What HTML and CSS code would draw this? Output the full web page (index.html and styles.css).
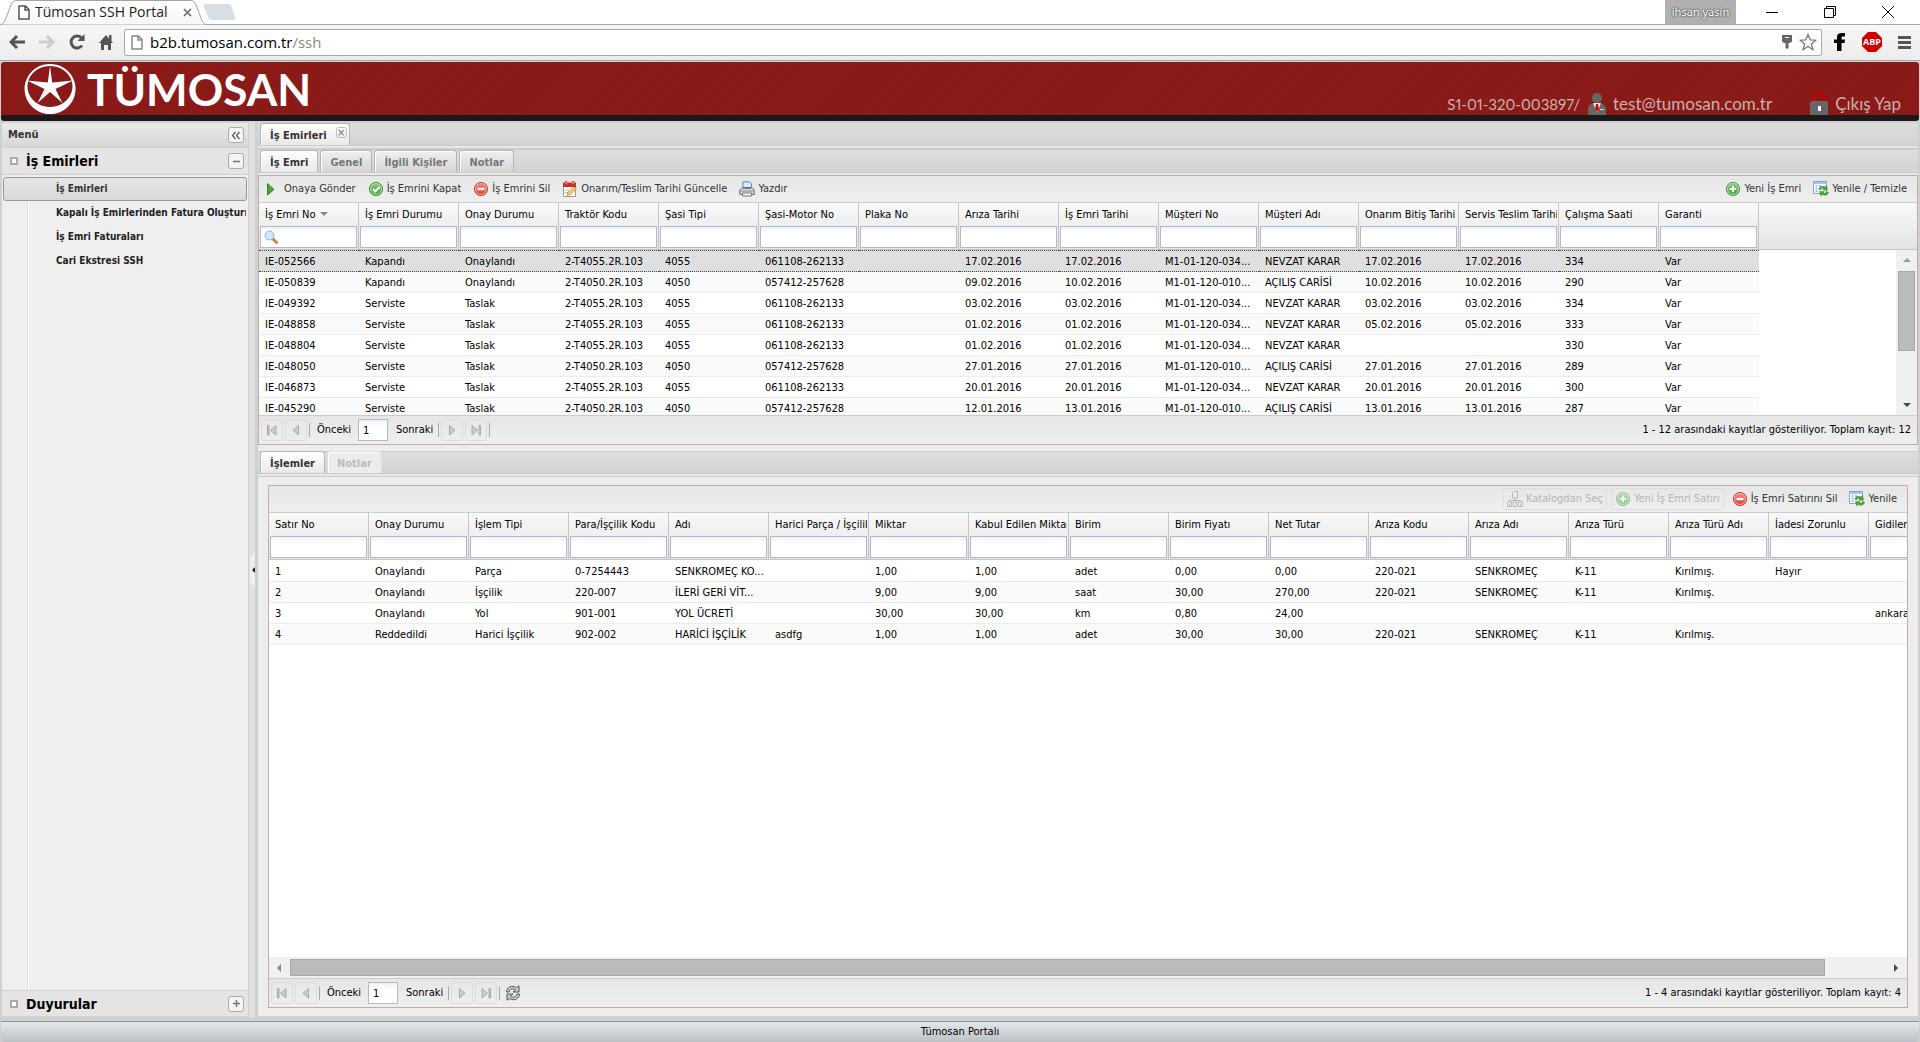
FILE: index.html
```html
<!DOCTYPE html>
<html lang="tr">
<head>
<meta charset="utf-8">
<title>Tümosan SSH Portal</title>
<link rel="stylesheet" href="styles.css">
</head>
<body>
<svg class="sprite" aria-hidden="true">
  <defs>
    <linearGradient id="gGreen" x1="0" y1="0" x2="0" y2="1"><stop offset="0" stop-color="#8fd080"/><stop offset="1" stop-color="#3c9a35"/></linearGradient>
    <linearGradient id="gRed" x1="0" y1="0" x2="0" y2="1"><stop offset="0" stop-color="#f59080"/><stop offset="1" stop-color="#d93a30"/></linearGradient>
    <linearGradient id="gTab" x1="0" y1="0" x2="0" y2="1"><stop offset="0" stop-color="#fff"/><stop offset="1" stop-color="#f7f7f7"/></linearGradient>
  </defs>
  <symbol id="i-play" viewBox="0 0 16 16"><path d="M2.500 2.500 9 8.500 2.500 14z" fill="#4ea72f" stroke="#36861d"/></symbol>
  <symbol id="i-ok" viewBox="0 0 16 16"><circle cx="8" cy="8" r="6.600" fill="url(#gGreen)" stroke="#3a8f35"/><circle cx="8" cy="8" r="5.500" fill="none" stroke="#b5e3aa"/><path d="m5 8 2.200 2.500L11.500 6" fill="none" stroke="#fff" stroke-width="2"/></symbol>
  <symbol id="i-del" viewBox="0 0 16 16"><circle cx="8" cy="8" r="6.600" fill="url(#gRed)" stroke="#c8453c"/><circle cx="8" cy="8" r="5.500" fill="none" stroke="#f8aaa0"/><path d="M4.500 6.800h7v2.400h-7z" fill="#fff"/></symbol>
  <symbol id="i-add" viewBox="0 0 16 16"><circle cx="8" cy="8" r="6.600" fill="url(#gGreen)" stroke="#4a9a44"/><circle cx="8" cy="8" r="5.500" fill="none" stroke="#b5e3aa"/><path d="M8 4.800v6.400M4.800 8h6.400" stroke="#fff" stroke-width="2"/></symbol>
  <symbol id="i-cal" viewBox="0 0 16 16"><path d="M1.500 4h12v11.500h-12z" fill="#fdfdfd" stroke="#999"/><path d="M1 1.500h13V6H1z" fill="#d8281f"/><path d="M4 0v4M11 0v4" stroke="#8b1512" stroke-width="2"/><path d="M4 .5v3M11 .5v3" stroke="#fff"/><path d="M3 9h4M3 11.500h3" stroke="#bbb"/><path d="m5 14.500.8-3L12 6l2.300 2-6.300 5.500z" fill="#f8cf6a" stroke="#c98a2c" stroke-width=".8"/></symbol>
  <symbol id="i-print" viewBox="0 0 16 16"><path d="M4 8V.8h6l2.500 2V8" fill="#dbe9fa" stroke="#5d87bd"/><path d="M.8 9 3 6.500h10L15.200 9v4.500H.8z" fill="#d8d8d8" stroke="#6d6d6d"/><path d="M4 7.500h8" stroke="#5d87bd"/><path d="M1.500 10h13" stroke="#8c8c8c"/><path d="M3.500 12h9v3h-9z" fill="#f3f6fa" stroke="#777"/></symbol>
  <symbol id="i-refresh" viewBox="0 0 16 16"><path d="M.5.500h13v12H.5z" fill="#fff" stroke="#7fa3d6"/><path d="M1 1h12v2H1z" fill="#a9c6ee"/><path d="M2.500 5h2M2.500 7.500h2M2.500 10h2M6 5h2" stroke="#86aee0" stroke-width="1.500"/><path d="M6 8.500C6 5.500 10 4.500 12 6l1.500-1.500 1 4.500-4.500.3 1-1.500c-1.500-1-2.500-.5-3 .7zM15.500 11c-.5 3.500-4.500 4-6.200 2.200L8 15 6.500 10.500l5 .2-1.200 1.300c1 .8 2.500.7 3-.9z" fill="#4fa83d" stroke="#2f7d27" stroke-width=".5"/></symbol>
  <symbol id="i-catalog" viewBox="0 0 16 16"><path d="M5.500 7V2L7 .5h3.500V7zM8 7v2M2.500 11V9.500h11V11" fill="#eee" stroke="#888"/><path d="M.5 11h4v4.500h-4zM6 11h4v4.500H6zM11.500 11h4v4.500h-4z" fill="#fff" stroke="#888"/><path d="M2 12.500h1V15H2zM13 12.500h1V15h-1z" fill="#5c94d8"/><path d="M7.500 12.500h1V15h-1z" fill="#e7a13e"/></symbol>
  <symbol id="i-first" viewBox="0 0 16 16"><path d="M3.500 3.500h1.500v9.500H3.500zM12 3.500V13L6.500 8.300z" fill="#ccc" stroke="#aaa"/></symbol>
  <symbol id="i-prev" viewBox="0 0 16 16"><path d="M10.500 3.500V13L5 8.300z" fill="#ccc" stroke="#aaa"/></symbol>
  <symbol id="i-next" viewBox="0 0 16 16"><path d="M5.500 3.500V13L11 8.300z" fill="#ccc" stroke="#aaa"/></symbol>
  <symbol id="i-last" viewBox="0 0 16 16"><path d="M4 3.500V13l5.500-4.700zM11 3.500h1.500v9.500H11z" fill="#ccc" stroke="#aaa"/></symbol>
  <symbol id="i-reload" viewBox="0 0 16 16"><path d="M1.500 7C1.500 2.500 7-.5 11.500 2.500L14 .8V7H8l2.500-2.200C8 3 4.500 4 4 7z" fill="#ccc" stroke="#555"/><path d="M14.500 9c0 4.500-5.500 7.500-10 4.500L2 15.200V9h6l-2.500 2.200c2.500 1.800 6 .8 6.500-2.200z" fill="#ccc" stroke="#555"/></symbol>
  <symbol id="i-doc" viewBox="0 0 12 15"><path d="M1 1h6.500L11 4.500V14H1zM7 1v4h4" fill="#fff" stroke="currentColor" stroke-width="1.500"/></symbol>
</svg>

<div class="browser">
  <div class="tabstrip">
    <div class="btab">
      <svg class="btab-shape" width="208" height="25" viewBox="0 0 208 25"><path d="M0 24.500c3 0 4-2 5-4L11 5c1-3 3-4.500 6-4.500h173c3 0 5 1.500 6 4.500l6 15.500c1 2.500 2 4 5 4" fill="url(#gTab)" stroke="#a3a3a3"/></svg>
      <svg class="btab-doc" width="12" height="15"><use href="#i-doc"/></svg>
      <span>Tümosan SSH Portal</span>
      <svg class="btab-x" width="9" height="9" viewBox="0 0 9 9"><path d="m1 1 7 7M8 1 1 8" stroke="#666" stroke-width="1.500"/></svg>
    </div>
    <svg width="32" height="16" viewBox="0 0 32 16"><path d="M3 0h22c2 0 3 1 3.500 2.500L32 13c.5 2 0 3-2 3H9c-2 0-3-1-3.500-2.500L.5 3C0 1 1 0 3 0z" fill="#d9dee5"/></svg>
    <div class="winctl">
      <span class="profile">ihsan yasin</span>
      <svg width="12" height="12" viewBox="0 0 12 12"><path d="M0 6.500h12" stroke="#000"/></svg>
      <svg width="12" height="12" viewBox="0 0 12 12"><path d="M.5 2.500h9v9h-9zM2.500 2.500v-2h9v9h-2" fill="none" stroke="#000"/></svg>
      <svg width="12" height="12" viewBox="0 0 12 12"><path d="m0 0 12 12M12 0 0 12" stroke="#000"/></svg>
    </div>
  </div>
  <div class="navbar">
    <svg width="16" height="14" viewBox="0 0 16 14"><path d="M8 1 2 7l6 6M2 7h14" fill="none" stroke="#555" stroke-width="3"/></svg>
    <svg width="16" height="14" viewBox="0 0 16 14"><path d="m8 1 6 6-6 6M14 7H0" fill="none" stroke="#ccc" stroke-width="3"/></svg>
    <svg width="16" height="16" viewBox="0 0 16 16"><path d="M13 11.500A6 6 0 1 1 12.500 4" fill="none" stroke="#555" stroke-width="3"/><path d="M15.500 0v7H8.500z" fill="#555"/></svg>
    <svg width="14" height="16" viewBox="0 0 14 16"><path d="m0 9 7-8 3 3.500V1h2.500v6L14 9h-2v7H9v-5H5v5H2V9z" fill="#555"/></svg>
    <div class="omnibox">
      <svg class="odoc" width="12" height="15"><use href="#i-doc"/></svg>
      <span class="url">b2b.tumosan.com.tr<i>/ssh</i></span>
      <svg width="10" height="14" viewBox="0 0 10 14"><path d="M0 0h10v6.500L8 8H6.500v5L5 14l-1.500-1V8H2L0 6.500z" fill="#666"/><path d="M3 2.500h4" stroke="#fff"/></svg>
      <svg width="18" height="18" viewBox="0 0 18 18"><path d="m9 1.500 2.200 5.300 5.700.4-4.400 3.700 1.400 5.600L9 13.500l-4.900 3 1.400-5.600L1.100 7.200l5.700-.4z" fill="#fff" stroke="#777" stroke-width="1.300"/></svg>
    </div>
    <svg width="12" height="18" viewBox="0 0 12 18"><path d="M3 18V10H0V6.500h3V4C3 1 5 0 7.500 0H11v3.500H9C7.500 3.500 7.500 4 7.500 6.500H11L10.500 10h-3v8z" fill="#000"/></svg>
    <span class="abp">ABP</span>
    <svg width="13" height="13" viewBox="0 0 13 13"><path d="M0 1.500h13M0 6.500h13M0 11.500h13" stroke="#555" stroke-width="3"/></svg>
  </div>
</div>

<header class="brand">
  <svg width="52" height="50" viewBox="0 0 52 50"><path fill-rule="evenodd" fill="#fff" d="M26 0a25.500 25 0 1 0 .1 0zM26 2a22.500 20.500 0 1 1-.1 0z"/><path fill="#fff" d="m26 2 2.200 16.500L49 16.500 31.500 25 38.500 39 26 28 13.500 39 20.500 25 3 16.500l20.800 2z"/></svg>
  <span class="brand-name">TÜMOSAN</span>
  <div class="brand-user">
    <span class="code">S1-01-320-003897/</span>
    <svg width="18" height="22" viewBox="0 0 18 22"><circle cx="9" cy="5" r="5" fill="#666"/><path d="M0 22v-6c0-3 2-5 5-5h8c3 0 5 2 5 5v6z" fill="#666"/><path d="m5 10 4 10 4-10z" fill="#eee"/><path d="M8 11h2l1 5-2 3-2-3z" fill="#d00"/><path d="M12 16.500h4" stroke="#ddd"/></svg>
    <a class="mail" href="#">test@tumosan.com.tr</a>
    <svg width="18" height="22" viewBox="0 0 18 22"><path d="M4 8V6c0-6 10-6 10 0v2" fill="none" stroke="#c80000" stroke-width="3"/><path d="M0 10c0-1 1-2 2-2h14c1 0 2 1 2 2v12H0z" fill="#666"/><path d="M8 13h3v5H8z" fill="#fff"/></svg>
    <a href="#">Çıkış Yap</a>
  </div>
</header>

<div class="workspace">
  <aside class="menu">
    <div class="menu-head"><span>Menü</span><button class="tool" aria-label="Daralt"><svg width="10" height="9" viewBox="0 0 10 9"><path d="M4.500 1 1.500 4.500l3 3.500M8.500 1l-3 3.500 3 3.500" fill="none" stroke="#555" stroke-width="1.200"/></svg></button></div>
    <div class="acc"><i class="bullet"></i><span>İş Emirleri</span><button class="tool" aria-label="Kapat"><svg width="9" height="9" viewBox="0 0 9 9"><path d="M1 4.500h7" stroke="#777" stroke-width="1.500"/></svg></button></div>
    <nav class="tree">
      <a class="on" href="#">İş Emirleri</a>
      <a href="#">Kapalı İş Emirlerinden Fatura Oluşturma</a>
      <a href="#">İş Emri Faturaları</a>
      <a href="#">Cari Ekstresi SSH</a>
    </nav>
    <div class="acc last"><i class="bullet"></i><span>Duyurular</span><button class="tool" aria-label="Aç"><svg width="9" height="9" viewBox="0 0 9 9"><path d="M1 4.500h7M4.500 1v7" stroke="#777" stroke-width="1.500"/></svg></button></div>
  </aside>
  <div class="splitter"><span class="grip"></span></div>

  <main class="content">
    <div class="tabs outer" role="tablist"><button class="tab on closable" role="tab">İş Emirleri<span class="close">×</span></button></div>
    <div class="tabs" role="tablist">
      <button class="tab on" role="tab">İş Emri</button><button class="tab" role="tab">Genel</button><button class="tab" role="tab">İlgili Kişiler</button><button class="tab" role="tab">Notlar</button>
    </div>

    <section class="grid orders">
      <div class="toolbar">
        <button><svg><use href="#i-play"/></svg>Onaya Gönder</button>
        <button><svg><use href="#i-ok"/></svg>İş Emrini Kapat</button>
        <button><svg><use href="#i-del"/></svg>İş Emrini Sil</button>
        <button><svg><use href="#i-cal"/></svg>Onarım/Teslim Tarihi Güncelle</button>
        <button><svg><use href="#i-print"/></svg>Yazdır</button>
        <span class="fill"></span>
        <button><svg><use href="#i-add"/></svg>Yeni İş Emri</button>
        <button><svg><use href="#i-refresh"/></svg>Yenile / Temizle</button>
      </div>
      <div class="view">
        <div class="clip">
        <table>
          <thead><tr>
            <th><label for="a1">İş Emri No <b class="sort"></b></label><div class="search"><input id="a1"><svg width="14" height="14" viewBox="0 0 14 14"><path d="m8.500 8.500 4 4" stroke="#c58a4c" stroke-width="3" stroke-linecap="round"/><circle cx="5.500" cy="5.500" r="4.500" fill="#cfe6fa" stroke="#8fb4dc"/></svg></div></th>
            <th><label for="a2">İş Emri Durumu</label><input id="a2"></th>
            <th><label for="a3">Onay Durumu</label><input id="a3"></th>
            <th><label for="a4">Traktör Kodu</label><input id="a4"></th>
            <th><label for="a5">Şasi Tipi</label><input id="a5"></th>
            <th><label for="a6">Şasi-Motor No</label><input id="a6"></th>
            <th><label for="a7">Plaka No</label><input id="a7"></th>
            <th><label for="a8">Arıza Tarihi</label><input id="a8"></th>
            <th><label for="a9">İş Emri Tarihi</label><input id="a9"></th>
            <th><label for="a10">Müşteri No</label><input id="a10"></th>
            <th><label for="a11">Müşteri Adı</label><input id="a11"></th>
            <th><label for="a12">Onarım Bitiş Tarihi</label><input id="a12"></th>
            <th><label for="a13">Servis Teslim Tarihi</label><input id="a13"></th>
            <th><label for="a14">Çalışma Saati</label><input id="a14"></th>
            <th><label for="a15">Garanti</label><input id="a15"></th>
          </tr></thead>
          <tbody>
            <tr class="sel"><td>IE-052566<td>Kapandı<td>Onaylandı<td>2-T4055.2R.103<td>4055<td>061108-262133<td><td>17.02.2016<td>17.02.2016<td>M1-01-120-034...<td>NEVZAT KARAR<td>17.02.2016<td>17.02.2016<td>334<td>Var</tr>
            <tr><td>IE-050839<td>Kapandı<td>Onaylandı<td>2-T4050.2R.103<td>4050<td>057412-257628<td><td>09.02.2016<td>10.02.2016<td>M1-01-120-010...<td>AÇILIŞ CARİSİ<td>10.02.2016<td>10.02.2016<td>290<td>Var</tr>
            <tr><td>IE-049392<td>Serviste<td>Taslak<td>2-T4055.2R.103<td>4055<td>061108-262133<td><td>03.02.2016<td>03.02.2016<td>M1-01-120-034...<td>NEVZAT KARAR<td>03.02.2016<td>03.02.2016<td>334<td>Var</tr>
            <tr><td>IE-048858<td>Serviste<td>Taslak<td>2-T4055.2R.103<td>4055<td>061108-262133<td><td>01.02.2016<td>01.02.2016<td>M1-01-120-034...<td>NEVZAT KARAR<td>05.02.2016<td>05.02.2016<td>333<td>Var</tr>
            <tr><td>IE-048804<td>Serviste<td>Taslak<td>2-T4055.2R.103<td>4055<td>061108-262133<td><td>01.02.2016<td>01.02.2016<td>M1-01-120-034...<td>NEVZAT KARAR<td><td><td>330<td>Var</tr>
            <tr><td>IE-048050<td>Serviste<td>Taslak<td>2-T4050.2R.103<td>4050<td>057412-257628<td><td>27.01.2016<td>27.01.2016<td>M1-01-120-010...<td>AÇILIŞ CARİSİ<td>27.01.2016<td>27.01.2016<td>289<td>Var</tr>
            <tr><td>IE-046873<td>Serviste<td>Taslak<td>2-T4055.2R.103<td>4055<td>061108-262133<td><td>20.01.2016<td>20.01.2016<td>M1-01-120-034...<td>NEVZAT KARAR<td>20.01.2016<td>20.01.2016<td>300<td>Var</tr>
            <tr><td>IE-045290<td>Serviste<td>Taslak<td>2-T4050.2R.103<td>4050<td>057412-257628<td><td>12.01.2016<td>13.01.2016<td>M1-01-120-010...<td>AÇILIŞ CARİSİ<td>13.01.2016<td>13.01.2016<td>287<td>Var</tr>
          </tbody>
        </table>
        </div>
        <div class="vscroll"><i class="up"></i><span class="thumb"></span><i class="down"></i></div>
      </div>
      <div class="paging">
        <button class="pg" aria-label="İlk" disabled><svg><use href="#i-first"/></svg></button><button class="pg" aria-label="Geri" disabled><svg><use href="#i-prev"/></svg></button>
        <i class="sep"></i><label for="p1">Önceki</label><input id="p1" value="1"><span class="after">Sonraki</span><i class="sep"></i>
        <button class="pg" aria-label="İleri" disabled><svg><use href="#i-next"/></svg></button><button class="pg" aria-label="Son" disabled><svg><use href="#i-last"/></svg></button><i class="sep"></i>
        <span class="fill"></span><span>1 - 12 arasındaki kayıtlar gösteriliyor. Toplam kayıt: 12</span>
      </div>
    </section>

    <div class="tabs lower" role="tablist"><button class="tab on" role="tab">İşlemler</button><button class="tab" role="tab" disabled>Notlar</button></div>
    <div class="panel">
    <section class="grid lines">
      <div class="toolbar">
        <span class="fill"></span>
        <button class="off" disabled><svg><use href="#i-catalog"/></svg>Katalogdan Seç</button>
        <button class="off" disabled><svg><use href="#i-add"/></svg>Yeni İş Emri Satırı</button>
        <button><svg><use href="#i-del"/></svg>İş Emri Satırını Sil</button>
        <button><svg><use href="#i-refresh"/></svg>Yenile</button>
      </div>
      <div class="view">
        <div class="clip">
        <table>
          <thead><tr>
            <th><label for="b1">Satır No</label><input id="b1"></th>
            <th><label for="b2">Onay Durumu</label><input id="b2"></th>
            <th><label for="b3">İşlem Tipi</label><input id="b3"></th>
            <th><label for="b4">Para/İşçilik Kodu</label><input id="b4"></th>
            <th><label for="b5">Adı</label><input id="b5"></th>
            <th><label for="b6">Harici Parça / İşçilik</label><input id="b6"></th>
            <th><label for="b7">Miktar</label><input id="b7"></th>
            <th><label for="b8">Kabul Edilen Miktar</label><input id="b8"></th>
            <th><label for="b9">Birim</label><input id="b9"></th>
            <th><label for="b10">Birim Fiyatı</label><input id="b10"></th>
            <th><label for="b11">Net Tutar</label><input id="b11"></th>
            <th><label for="b12">Arıza Kodu</label><input id="b12"></th>
            <th><label for="b13">Arıza Adı</label><input id="b13"></th>
            <th><label for="b14">Arıza Türü</label><input id="b14"></th>
            <th><label for="b15">Arıza Türü Adı</label><input id="b15"></th>
            <th><label for="b16">İadesi Zorunlu</label><input id="b16"></th>
            <th><label for="b17">Gidilen Yer</label><input id="b17"></th>
          </tr></thead>
          <tbody>
            <tr><td>1<td>Onaylandı<td>Parça<td>0-7254443<td>SENKROMEÇ KO...<td><td>1,00<td>1,00<td>adet<td>0,00<td>0,00<td>220-021<td>SENKROMEÇ<td>K-11<td>Kırılmış.<td>Hayır<td></tr>
            <tr><td>2<td>Onaylandı<td>İşçilik<td>220-007<td>İLERİ GERİ VİT...<td><td>9,00<td>9,00<td>saat<td>30,00<td>270,00<td>220-021<td>SENKROMEÇ<td>K-11<td>Kırılmış.<td><td></tr>
            <tr><td>3<td>Onaylandı<td>Yol<td>901-001<td>YOL ÜCRETİ<td><td>30,00<td>30,00<td>km<td>0,80<td>24,00<td><td><td><td><td><td>ankara</tr>
            <tr><td>4<td>Reddedildi<td>Harici İşçilik<td>902-002<td>HARİCİ İŞÇİLİK<td>asdfg<td>1,00<td>1,00<td>adet<td>30,00<td>30,00<td>220-021<td>SENKROMEÇ<td>K-11<td>Kırılmış.<td><td></tr>
          </tbody>
        </table>
        </div>
      </div>
      <div class="hscroll"><i class="left"></i><div class="track"><span class="thumb"></span></div><i class="right"></i></div>
      <div class="paging">
        <button class="pg" aria-label="İlk" disabled><svg><use href="#i-first"/></svg></button><button class="pg" aria-label="Geri" disabled><svg><use href="#i-prev"/></svg></button>
        <i class="sep"></i><label for="p2">Önceki</label><input id="p2" value="1"><span class="after">Sonraki</span><i class="sep"></i>
        <button class="pg" aria-label="İleri" disabled><svg><use href="#i-next"/></svg></button><button class="pg" aria-label="Son" disabled><svg><use href="#i-last"/></svg></button><i class="sep"></i>
        <button class="pg live" aria-label="Yenile"><svg><use href="#i-reload"/></svg></button>
        <span class="fill"></span><span>1 - 4 arasındaki kayıtlar gösteriliyor. Toplam kayıt: 4</span>
      </div>
    </section>
    </div>
  </main>
</div>
<footer class="status">Tümosan Portalı</footer>
</body>
</html>
```
FILE: styles.css
```css
* { box-sizing: border-box; }
html, body { height: 100%; }
body {
  margin: 0;
  display: flex;
  flex-direction: column;
  overflow: hidden;
  background: #d0d0d0;
  color: #000;
  font: 11px/14px "DejaVu Sans Condensed", "Noto Sans", sans-serif;
}
button, input { font: inherit; color: inherit; margin: 0; }
button { border: 0; background: none; padding: 0; white-space: nowrap; }
svg { flex: none; display: block; }
.sprite { position: absolute; width: 0; height: 0; }
.fill { flex: 1; }

/* browser frame */
.browser { flex: none; background: #fff; border-bottom: 1px solid #a8a8a8; font-family: "Open Sans", sans-serif; }
.tabstrip { display: flex; height: 24px; align-items: center; }
.tabstrip > svg { margin-left: -4px; }
.btab { position: relative; z-index: 1; display: flex; align-items: center; width: 207px; height: 25px; padding-left: 18px; font-size: 14px; line-height: 24px; color: #222; white-space: nowrap; }
.btab-shape { position: absolute; left: 0; top: 0; }
.btab > :not(.btab-shape) { position: relative; }
.btab-doc { color: #555; }
.btab span { margin-left: 5px; flex: 1; }
.btab-x { margin-right: 15px; }
.winctl { margin-left: auto; display: flex; align-items: center; gap: 46px; padding-right: 26px; }
.profile { width: 71px; height: 24px; margin-right: -16px; background: #b0b0b0; color: #fff; font: 11px/23px "Noto Sans", sans-serif; text-align: center; text-shadow: 0 0 2px #444, 0 0 2px #444; }
.navbar { display: flex; align-items: center; height: 36px; padding: 0 9px 1px; gap: 14px; border-top: 1px solid #a8a8a8; background: linear-gradient(#f7f7f7, #ececec); }
.omnibox { flex: 1; display: flex; align-items: center; height: 27px; margin: 0 -2px 0 -3px; padding: 0 4px 0 6px; border: 1px solid #aaa; border-radius: 2px; background: #fff; gap: 7px; }
.odoc { color: #888; }
.url { flex: 1; font-size: 15px; line-height: 24px; }
.url i { font-style: normal; color: #888; }
.abp { width: 20px; height: 20px; margin: 0 2px; background: #d00000; clip-path: polygon(30% 0, 70% 0, 100% 30%, 100% 70%, 70% 100%, 30% 100%, 0 70%, 0 30%); color: #fff; font: bold 9px/20px "Open Sans", sans-serif; text-align: center; }

/* brand header */
.brand {
  flex: none; display: flex; align-items: center; height: 59px; margin: 1px 1px 0; padding: 0 18px 0 23px;
  border-radius: 3px; border-bottom: 6px solid #1a1a1a;
  background: repeating-linear-gradient(135deg, #8b1c19 0 2px, #881916 2px 4px);
  font-family: Lato, sans-serif; color: #fff;
}
.brand-name { margin-left: 11px; padding-top: 1px; font-size: 44px; line-height: 50px; font-weight: 700; }
.brand-user { margin-left: auto; align-self: flex-end; display: flex; align-items: flex-end; font-size: 17px; line-height: 22px; color: #c9b0ae; }
.brand-user svg { margin: 0 7px 0 8px; }
.brand-user a { color: inherit; text-decoration: none; }
.code { font-size: 15px; font-variant-numeric: proportional-nums; }
.mail { margin-right: 30px; }

/* workspace */
.workspace { flex: 1; min-height: 0; display: flex; padding: 1px 1px 0; }
.menu { width: 248px; flex: none; display: flex; flex-direction: column; border: 1px solid #d0d0d0; background: #efefef; }
.menu-head, .acc { flex: none; display: flex; align-items: center; justify-content: space-between; padding: 0 4px 0 6px; font-weight: 700; }
.menu-head { height: 25px; background: linear-gradient(#e9e9e9, #d8d8d8); color: #333; border-bottom: 1px solid #d0d0d0; }
.acc { height: 27px; background: #e4e4e4; border-bottom: 1px solid #d0d0d0; font-size: 14px; line-height: 18px; padding-left: 8px; }
.acc span { flex: 1; margin-left: 8px; }
.acc.last { border-top: 1px solid #d0d0d0; }
.bullet { width: 8px; height: 8px; border: 2px solid #aaa; background: #fff; }
.tool { width: 16px; height: 16px; display: flex; align-items: center; justify-content: center; border: 1px solid #aaa; border-radius: 3px; background: #f4f4f4; }
.tree { flex: 1; display: flex; flex-direction: column; padding: 2px 1px; font-size: 10px; background: linear-gradient(#fff, #fff) 26px 0 / 1px 100% no-repeat, linear-gradient(#ddd, #ddd) 25px 0 / 1px 100% no-repeat; }
.tree a { flex: none; height: 24px; padding-left: 52px; border: 1px solid transparent; border-radius: 3px; color: #222; font-weight: 700; line-height: 22px; text-decoration: none; white-space: nowrap; overflow: hidden; }
.tree a.on { border-color: #999; background: linear-gradient(#e6e6e6, #d9d9d9); color: #333; }
.splitter { flex: none; width: 8px; display: flex; align-items: center; background: #e0e0e0; border-right: 2px solid #d0d0d0; }
.grip { width: 5px; height: 36px; margin-left: 1px; background: #eee; clip-path: polygon(100% 0, 100% 100%, 0 85%, 0 15%); }
.grip::after { content: ""; display: block; margin: 15px 0 0 1px; border: 3px solid transparent; border-left: 0; border-right-color: #222; }

.content { flex: 1; min-width: 0; display: flex; flex-direction: column; background: #ededed; border: solid #d0d0d0; border-width: 0 1px 2px; }
.tabs { flex: none; display: flex; align-items: flex-end; gap: 2px; height: 27px; padding: 0 2px 3px; background: linear-gradient(#dedede, #d2d2d2); border-bottom: 1px solid #bfb0b0; box-shadow: inset 0 -2px #e8e8e8, inset 0 -3px #ccc, inset 0 1px #ccc; }
.tab { height: 22px; padding: 2px 9px 0; border: 1px solid #b5b5b5; border-bottom: 0; border-radius: 3px 3px 0 0; background: linear-gradient(#f0f0f0, #d6d6d6); box-shadow: inset 1px 1px #fff; color: #777; font-weight: 700; }
.tab.on { background: linear-gradient(#fff, #e8e8e8); color: #333; }
.tab:disabled { color: #bbb; border-color: #ddd; background: #ececec; }
.outer { border-bottom-color: #ccc; }
.closable { display: flex; align-items: center; padding-right: 2px; gap: 9px; }
.close { width: 11px; height: 11px; margin-bottom: 6px; border: 1px solid #bbb; border-radius: 3px; font: bold 10px/9px "DejaVu Sans", sans-serif; color: #888; text-align: center; }
.lower { margin-top: 6px; height: 26px; border-bottom-color: #ccc; }
.panel { flex: 1; min-height: 0; padding: 8px 10px; display: flex; flex-direction: column; }

/* grids */
.grid { display: flex; flex-direction: column; border: solid #c0adad; border-width: 0 1px 1px; background: #fff; }
.orders { flex: none; }
.lines { flex: 1; min-height: 0; border-top-width: 1px; }
.lines .view { flex: 1; min-height: 0; }
.toolbar, .paging { flex: none; display: flex; align-items: center; background: linear-gradient(#e6e6e6, #efefef); }
.toolbar { height: 27px; padding: 0 6px 0 2px; gap: 4px; border-bottom: 1px solid #ccc; }
.toolbar button { display: flex; align-items: center; gap: 3px; height: 22px; padding: 0 3px; color: #333; border: 1px solid transparent; border-radius: 3px; }
.toolbar svg, .pg svg { width: 16px; height: 16px; }
.toolbar .off { border-color: #ddd; color: #b5b5b5; }
.off svg { opacity: 0.5; }
.view { display: flex; background: linear-gradient(#f9f9f9, #e3e4e6) 0 0 / 100% 46px no-repeat, linear-gradient(#c5c5c5, #c5c5c5) 0 46px / 100% 1px no-repeat #fff; overflow: hidden; }
.orders .view { height: 212px; }
.clip { flex: 1; min-width: 0; overflow: hidden; }
table { border-collapse: separate; border-spacing: 0; table-layout: fixed; width: 0; }
th { width: 100px; height: 47px; padding: 0 1px; border-right: 1px solid #c5c5c5; border-bottom: 1px solid #c5c5c5; font-weight: 400; text-align: left; vertical-align: top; }
th label { display: block; height: 23px; padding-left: 5px; line-height: 23px; white-space: nowrap; overflow: hidden; }
th input, .paging input { display: block; width: 97px; height: 22px; border: 1px solid #b5b8c8; border-radius: 0; background: linear-gradient(#eef1f3, #fff 6px); outline: 0; padding: 0 4px; }
.search { position: relative; }
.search svg { position: absolute; left: 4px; top: 4px; }
.sort { display: inline-block; margin-left: 1px; vertical-align: 2px; border: 4px solid transparent; border-top-color: #888; border-bottom: 0; }
td { height: 21px; padding: 1px 6px 0; border-bottom: 1px solid #ededed; line-height: 19px; white-space: nowrap; overflow: hidden; }
tbody tr:first-child td { height: 22px; border-top: 1px solid transparent; }
tbody tr:nth-child(even) td { background: #fafafa; }
tbody .sel td { background: #dfdfdf; border-bottom: 1px dotted #444; }
tbody tr.sel:first-child td { border-top: 1px dotted #444; }

.vscroll { flex: none; width: 21px; margin-top: 47px; padding: 8px 2px; display: flex; flex-direction: column; align-items: center; background: #f0f0f0; }
.vscroll .thumb { width: 17px; height: 80px; margin-top: 9px; }
.thumb { background: #bbb; border: 1px solid #a8a8a8; }
.up, .down { border: 4px solid transparent; }
.up { border-bottom-color: #999; border-top: 0; }
.down { margin-top: auto; border-top-color: #444; border-bottom: 0; }
.hscroll { flex: none; height: 21px; display: flex; align-items: center; justify-content: space-between; padding: 0 9px 0 8px; background: #f0f0f0; }
.track { flex: 1; margin: 0 5px 0 9px; }
.track .thumb { display: block; width: 96%; height: 17px; }
.left, .right { border: 4px solid transparent; }
.left { border-right-color: #888; border-left: 0; }
.right { border-left-color: #444; border-right: 0; }

.paging { height: 29px; padding: 0 6px 0 2px; border-top: 1px solid #ccc; }
.paging input { width: 30px; }
.pg { width: 22px; height: 22px; margin-right: 2px; display: flex; align-items: center; justify-content: center; border: 1px solid #ddd; border-radius: 3px; }
.pg.live { border-color: transparent; }
.sep { width: 1px; height: 14px; background: #aaa; margin-right: 2px; }
.paging label { width: 46px; padding-left: 5px; }
.after { width: 50px; padding-left: 8px; }

.status { flex: none; height: 21px; margin: 3px 1px 0; border-top: 1px solid #8e949c; border-radius: 0 0 4px 4px; background: linear-gradient(#e3e7ea, #bcc1c6); text-align: center; line-height: 20px; }
```
